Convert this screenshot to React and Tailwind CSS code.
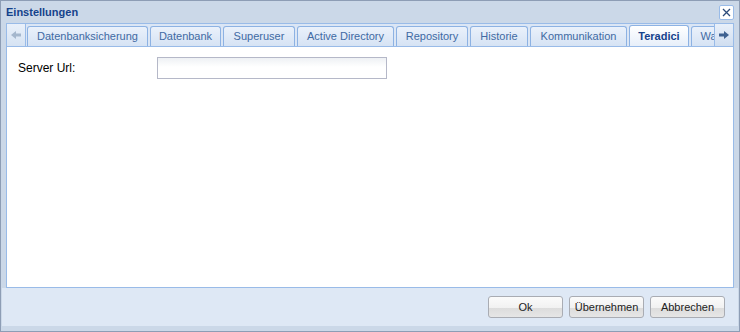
import React from 'react';

const tabs = [
  { label: 'Datenbanksicherung', w: 'w-[121px]' },
  { label: 'Datenbank', w: 'w-[71px]' },
  { label: 'Superuser', w: 'w-[72px]' },
  { label: 'Active Directory', w: 'w-[97px]' },
  { label: 'Repository', w: 'w-[72px]' },
  { label: 'Historie', w: 'w-[58px]' },
  { label: 'Kommunikation', w: 'w-[97px]' },
  { label: 'Teradici', w: 'w-[60px]', active: true },
  { label: 'Wartung', w: 'w-[60px]' },
];

function Button({ children }) {
  return (
    <button className="w-[75px] h-[22px] rounded-[3px] border border-[#a9acb3] bg-[linear-gradient(#fbfbfb_0%,#f1f1f1_55%,#dcdcdc_56%,#e6e6e6_100%)] text-[11px] text-[#222] leading-none">
      {children}
    </button>
  );
}

export default function App() {
  return (
    <div className="w-[740px] h-[332px] flex flex-col border border-[#8d9db5] bg-[#cbd8e8] font-['Liberation_Sans',Arial,sans-serif]">
      {/* header */}
      <div className="h-[22px] flex items-center justify-between pl-[5px] pr-[5px]">
        <span className="text-[11px] font-bold text-[#15428b]">Einstellungen</span>
        <div className="w-[15px] h-[15px] mt-[1px] border border-[#99bbe8] rounded-[2px] bg-white flex items-center justify-center">
          <svg width="11" height="11" viewBox="0 0 11 11">
            <path d="M2 2 L9 9 M9 2 L2 9" stroke="#2b4b7a" strokeWidth="1.3" />
          </svg>
        </div>
      </div>

      {/* tab panel */}
      <div className="mx-[5px] flex flex-col h-[265px] border border-[#99bbe8]">
        <div className="h-[23px] flex bg-[#dbe6f5] border-b border-[#99bbe8]">
          <div className="w-[19px] h-[22px] flex items-center justify-center bg-[linear-gradient(#e9f0fa,#d6e3f3)] border-r border-[#99bbe8]">
            <svg width="10" height="10" viewBox="0 0 10 10">
              <path d="M0 5 L5 1 L5 3.5 L10 3.5 L10 6.5 L5 6.5 L5 9 Z" fill="#a5b7cd" />
            </svg>
          </div>
          <div className="flex-1 flex gap-[2px] pl-[1px] overflow-hidden items-end">
            {tabs.map((t) =>
              t.active ? (
                <div
                  key={t.label}
                  className={`${t.w} shrink-0 h-[22px] -mb-[1px] rounded-t-[3px] border border-b-0 border-[#8db2e3] bg-[linear-gradient(#ffffff,#e6eef9)] flex items-center justify-center text-[11px] font-bold text-[#15428b]`}
                >
                  {t.label}
                </div>
              ) : (
                <div
                  key={t.label}
                  className={`${t.w} shrink-0 h-[20px] rounded-t-[3px] border border-b-0 border-[#8db2e3] bg-[linear-gradient(#eaf1fb,#d6e3f4)] flex items-center justify-center text-[11px] text-[#416aa3] whitespace-nowrap overflow-hidden`}
                >
                  {t.label}
                </div>
              )
            )}
          </div>
          <div className="w-[19px] h-[22px] flex items-center justify-center bg-[linear-gradient(#e9f0fa,#d0def0)] border-l border-[#99bbe8]">
            <svg width="10" height="10" viewBox="0 0 10 10">
              <path d="M10 5 L5 1 L5 3.5 L0 3.5 L0 6.5 L5 6.5 L5 9 Z" fill="#3f6291" />
            </svg>
          </div>
        </div>
        <div className="flex-1 bg-white pt-[10px] px-[11px]">
          <div className="flex items-center">
            <label className="w-[139px] text-[12px] text-[#000]">Server Url:</label>
            <input
              type="text"
              className="w-[230px] h-[22px] border border-[#b5b8c8] bg-[linear-gradient(#eef1f4,#ffffff_45%)] outline-none px-[3px] text-[12px]"
            />
          </div>
        </div>
      </div>

      {/* footer */}
      <div className="mx-[1px] h-[38px] bg-[#dee8f5] flex items-center justify-end gap-[6px] pr-[13px]">
        <Button>Ok</Button>
        <Button>Übernehmen</Button>
        <Button>Abbrechen</Button>
      </div>
      <div className="flex-1" />
    </div>
  );
}
